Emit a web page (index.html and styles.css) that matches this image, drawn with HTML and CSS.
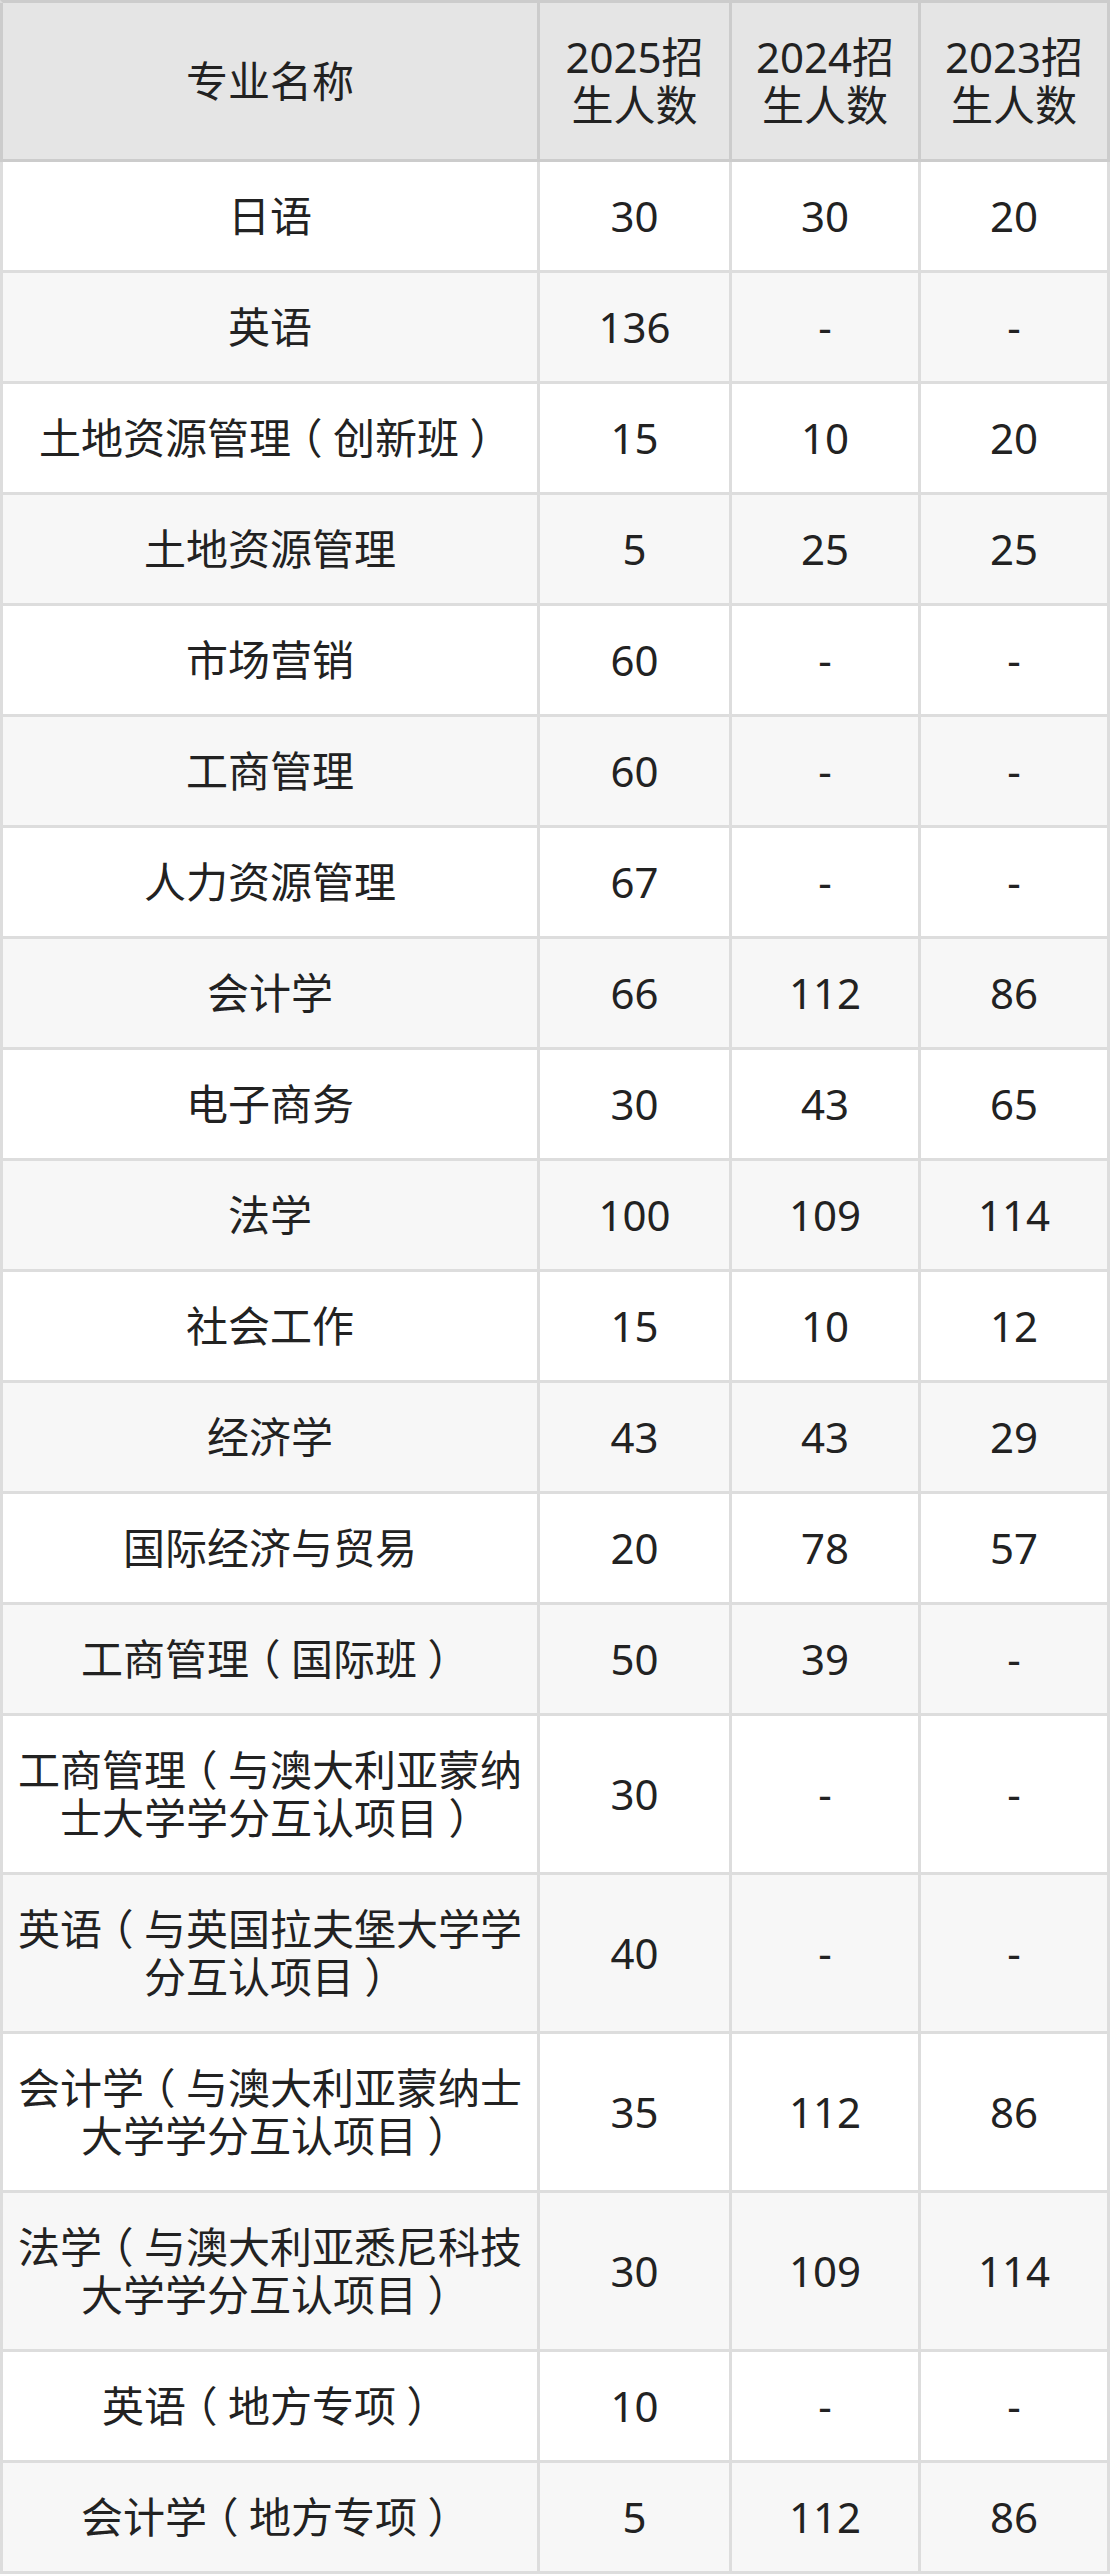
FILE: index.html
```html
<!DOCTYPE html>
<html lang="zh-CN">
<head>
<meta charset="utf-8">
<title>招生人数</title>
<link rel="stylesheet" href="styles.css">
</head>
<body>
<table class="plan">
  <thead>
    <tr>
      <th class="c-name">专业名称</th>
      <th class="c-num">2025招生人数</th>
      <th class="c-num2">2024招生人数</th>
      <th class="c-num2">2023招生人数</th>
    </tr>
  </thead>
  <tbody>
    <tr><td>日语</td><td>30</td><td>30</td><td>20</td></tr>
    <tr><td>英语</td><td>136</td><td>-</td><td>-</td></tr>
    <tr><td>土地资源管理<span class="pn">（</span>创新班<span class="pn">）</span></td><td>15</td><td>10</td><td>20</td></tr>
    <tr><td>土地资源管理</td><td>5</td><td>25</td><td>25</td></tr>
    <tr><td>市场营销</td><td>60</td><td>-</td><td>-</td></tr>
    <tr><td>工商管理</td><td>60</td><td>-</td><td>-</td></tr>
    <tr><td>人力资源管理</td><td>67</td><td>-</td><td>-</td></tr>
    <tr><td>会计学</td><td>66</td><td>112</td><td>86</td></tr>
    <tr><td>电子商务</td><td>30</td><td>43</td><td>65</td></tr>
    <tr><td>法学</td><td>100</td><td>109</td><td>114</td></tr>
    <tr><td>社会工作</td><td>15</td><td>10</td><td>12</td></tr>
    <tr><td>经济学</td><td>43</td><td>43</td><td>29</td></tr>
    <tr><td>国际经济与贸易</td><td>20</td><td>78</td><td>57</td></tr>
    <tr><td>工商管理<span class="pn">（</span>国际班<span class="pn">）</span></td><td>50</td><td>39</td><td>-</td></tr>
    <tr><td>工商管理<span class="pn">（</span>与澳大利亚蒙纳士大学学分互认项目<span class="pn">）</span></td><td>30</td><td>-</td><td>-</td></tr>
    <tr><td>英语<span class="pn">（</span>与英国拉夫堡大学学分互认项目<span class="pn">）</span></td><td>40</td><td>-</td><td>-</td></tr>
    <tr><td>会计学<span class="pn">（</span>与澳大利亚蒙纳士大学学分互认项目<span class="pn">）</span></td><td>35</td><td>112</td><td>86</td></tr>
    <tr><td>法学<span class="pn">（</span>与澳大利亚悉尼科技大学学分互认项目<span class="pn">）</span></td><td>30</td><td>109</td><td>114</td></tr>
    <tr><td>英语<span class="pn">（</span>地方专项<span class="pn">）</span></td><td>10</td><td>-</td><td>-</td></tr>
    <tr><td>会计学<span class="pn">（</span>地方专项<span class="pn">）</span></td><td>5</td><td>112</td><td>86</td></tr>
  </tbody>
</table>
</body>
</html>
```

FILE: styles.css
```css
html, body {
  margin: 0;
  padding: 0;
  background: #ffffff;
}

.plan {
  width: 1110px;
  table-layout: fixed;
  border-collapse: separate;
  border-spacing: 0;
  border-top: 3px solid #cccccc;
  border-left: 3px solid #dddddd;
  font-family: "Noto Sans", "Noto Sans CJK SC", sans-serif;
  font-size: 42px;
  line-height: 48px;
  color: #222222;
}

/* centred full-width parentheses, as in the reference */
.pn {
  display: inline-block;
  width: 1em;
  text-align: center;
  font-feature-settings: "halt" 1;
}

.plan th,
.plan td {
  box-sizing: border-box;
  padding: 30px 10px;
  text-align: center;
  vertical-align: middle;
  border-right: 3px solid #dddddd;
  border-bottom: 3px solid #dddddd;
  font-weight: normal;
}

.plan thead th {
  background: #e5e5e5;
  border-right-color: #cccccc;
  border-bottom-color: #cccccc;
}

.plan thead th:first-child {
  box-shadow: -3px 0 0 #cccccc;
}

.c-name { width: 537px; }
.c-num { width: 192px; }
.c-num2 { width: 189px; }

.plan tbody tr:nth-child(odd) td { background: #ffffff; }
.plan tbody tr:nth-child(even) td { background: #f7f7f7; }
```
